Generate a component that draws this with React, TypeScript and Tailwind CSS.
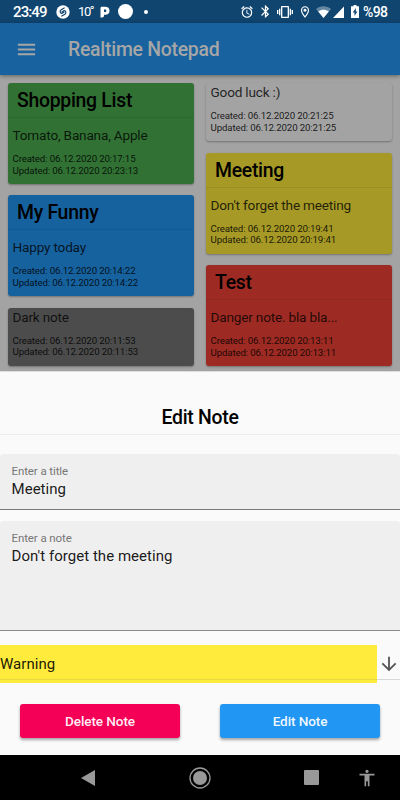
import clsx from "clsx";
import type { FC } from "react";
import { MdAccessibility, MdAlarm, MdArrowDownward, MdBluetooth, MdMenu, MdOutlineLocationOn, MdVibration } from "react-icons/md";

type Note = {
  title?: string;
  text: string;
  created: string;
  updated: string;
  color: string;
};

const leftNotes: Note[] = [
  {
    title: "Shopping List",
    text: "Tomato, Banana, Apple",
    created: "06.12.2020 20:17:15",
    updated: "06.12.2020 20:23:13",
    color: "bg-[#317234]",
  },
  {
    title: "My Funny",
    text: "Happy today",
    created: "06.12.2020 20:14:22",
    updated: "06.12.2020 20:14:22",
    color: "bg-[#16629f]",
  },
  { text: "Dark note", created: "06.12.2020 20:11:53", updated: "06.12.2020 20:11:53", color: "bg-[#4c4c4c]" },
];

const rightNotes: Note[] = [
  { text: "Good luck :)", created: "06.12.2020 20:21:25", updated: "06.12.2020 20:21:25", color: "bg-[#a3a3a3]" },
  {
    title: "Meeting",
    text: "Don't forget the meeting",
    created: "06.12.2020 20:19:41",
    updated: "06.12.2020 20:19:41",
    color: "bg-[#a69926]",
  },
  {
    title: "Test",
    text: "Danger note. bla bla...",
    created: "06.12.2020 20:13:11",
    updated: "06.12.2020 20:13:11",
    color: "bg-[#9e2b23]",
  },
];

const StatusBar: FC = () => {
  return (
    <div className="flex items-center h-[23px] bg-[#104570] text-white">
      <span className="ml-[13px] w-[34px] text-[15px] leading-[24px] font-medium tracking-[-0.9px] whitespace-nowrap">23:49</span>
      <svg className="ml-[9px] size-[14px]" viewBox="0 0 14 14">
        <circle cx="7" cy="7" r="6.7" fill="#fff" />
        <path
          d="M8.2 3 5.2 4.7C3.3 5.9 4.1 8.7 6.2 8.3L7.9 7.2M5.8 11 8.8 9.3C10.7 8.1 9.9 5.3 7.8 5.7L6.1 6.8"
          fill="none"
          stroke="#104570"
          strokeWidth="1.2"
          strokeLinecap="round"
        />
      </svg>
      <span className="ml-[8px] w-[14px] text-[13px] leading-[24px] tracking-[-1.4px] whitespace-nowrap">
        10<span className="relative -top-px">°</span>
      </span>
      <svg className="ml-[8px] w-[10px] h-[12px]" viewBox="0 0 10 12">
        <path
          fill="#fff"
          fillRule="evenodd"
          d="M2 .7H5C7.9.7 9.5 2.2 9.5 4.7S7.9 8.8 5.3 8.8H4V9.6C4 11 3.2 11.5 2.2 11.5H.5V2.2C.5 1.2 1.1.7 2 .7ZM4 3.4V6H5C5.9 6 6.4 5.5 6.4 4.7S5.9 3.4 5 3.4Z"
        />
      </svg>
      <span className="ml-[8px] size-[15px] rounded-full bg-white" />
      <span className="ml-[11px] size-[4px] rounded-full bg-white" />
      <MdAlarm className="ml-[92px] size-[14px]" />
      <MdBluetooth className="ml-[4px] size-[15px]" />
      <MdVibration className="ml-[4px] size-[16px]" />
      <MdOutlineLocationOn className="ml-[5px] size-[14px]" />
      <svg className="ml-[4px] w-[15px] h-[12px]" viewBox="0 0 15 12">
        <path d="M7.5 12 0 3C4.3-.6 10.7-.6 15 3Z" fill="#fff" opacity=".35" />
        <path d="M7.5 12 2.2 5.5C5.3 3 9.7 3 12.8 5.5Z" fill="#fff" />
      </svg>
      <svg className="ml-[2px] w-[11px] h-[12px]" viewBox="0 0 11 12">
        <path d="M0 12 11 .5V12Z" fill="#fff" />
      </svg>
      <svg className="ml-[7px] w-[8px] h-[13px]" viewBox="0 0 8 13">
        <path d="M2.5 0h3v1.3H8V13H0V1.3h2.5Z" fill="#fff" />
        <path d="M4.8 3 1.8 7.4h1.7V11l2.9-4.6H4.8Z" fill="#104570" />
      </svg>
      <span className="ml-[4px] text-[14px] leading-[24px] tracking-[-0.6px] font-medium">%98</span>
    </div>
  );
};

const NoteCard: FC<{ note: Note }> = ({ note }) => {
  return (
    <div className={clsx("w-[186px] rounded-[3px] shadow-[0_1px_2px_rgba(0,0,0,0.3)]", note.color, note.title ? "h-[101px]" : "h-[58px]")}>
      {note.title && (
        <h2 className="pl-[9px] mb-[8px] h-[35px] border-b border-black/8 text-[19.4px] leading-[36px] font-medium tracking-[-0.28px]">
          {note.title}
        </h2>
      )}
      <div className="px-[4.5px]">
        <p className="text-[13.6px] leading-[18px] tracking-[-0.19px] text-black/80 whitespace-nowrap">{note.text}</p>
        <div className="pt-[9px] text-[9.7px] leading-[11.5px] tracking-[-0.14px] text-black/85">
          <p>Created: {note.created}</p>
          <p>Updated: {note.updated}</p>
        </div>
      </div>
    </div>
  );
};

const EditSheet: FC = () => {
  return (
    <section className="h-[384px] bg-[#fafafa] border-t border-[#dedede]">
      <h2 className="h-[63px] pt-[32px] border-b border-[#ececec] text-center text-[19.4px] leading-[28px] font-medium tracking-[-0.28px]">
        Edit Note
      </h2>
      <div className="mt-[19px] h-[56px] pl-[11.5px] pt-[10px] bg-[#efefef] border-b border-[#777] rounded-t-[4px]">
        <p className="text-[11.5px] leading-[15px] tracking-[-0.1px] text-[#777]">Enter a title</p>
        <p className="text-[15px] leading-[20px] tracking-[0.04px] text-black/90">Meeting</p>
      </div>
      <div className="mt-[11px] h-[110px] pl-[11.5px] pt-[10px] bg-[#efefef] border-b border-[#888] rounded-t-[4px]">
        <p className="text-[11.5px] leading-[15px] tracking-[-0.1px] text-[#777]">Enter a note</p>
        <p className="text-[15px] leading-[20px] tracking-[0.04px] text-black/90">Don't forget the meeting</p>
      </div>
      <div className="flex mt-[14px] h-[38px]">
        <div className="w-[377px] bg-[#ffeb3b] text-black/90">
          <p className="h-[35px] border-b border-[#e9d83f] text-[15px] leading-[38px] tracking-[0.04px]">Warning</p>
        </div>
        <div className="flex flex-1 justify-center items-center h-[35px] pt-[3px] border-b border-[#d8d8d8]">
          <MdArrowDownward className="size-[22px] text-[#555]" />
        </div>
      </div>
      <div className="flex gap-10 px-5 mt-[21px]">
        <button className="flex-1 h-[34px] rounded-[3px] bg-[#f50057] text-[13.6px] font-medium tracking-[-0.12px] text-white/95 shadow-[0_2px_3px_rgba(0,0,0,0.35)]">
          Delete Note
        </button>
        <button className="flex-1 h-[34px] rounded-[3px] bg-[#2196f3] text-[13.6px] font-medium tracking-[-0.12px] text-white/95 shadow-[0_2px_3px_rgba(0,0,0,0.35)]">
          Edit Note
        </button>
      </div>
    </section>
  );
};

const NavigationBar: FC = () => {
  return (
    <nav className="flex items-center h-[45px] bg-black text-[#999]">
      <svg className="ml-[81px] w-[14px] h-[16px]" viewBox="0 0 14 16">
        <path d="M0 8 14 0V16Z" fill="currentColor" />
      </svg>
      <svg className="ml-[94px] size-[22px]" viewBox="0 0 22 22">
        <circle cx="11" cy="11" r="10" fill="none" stroke="currentColor" strokeWidth="1.3" />
        <circle cx="11" cy="11" r="7" fill="currentColor" />
      </svg>
      <span className="ml-[93px] size-[15px] rounded-[1px] bg-[#999]" />
      <MdAccessibility className="ml-[38px] size-[20px]" />
    </nav>
  );
};

export default function App() {
  return (
    <div className="w-[400px] h-[800px] overflow-hidden bg-[#a3a3a3] font-[Roboto,sans-serif] text-black">
      <StatusBar />
      <header className="flex items-center h-[52px] bg-[#17629f] shadow-[0_1px_4px_rgba(0,0,0,0.4)] text-[#a6a6a6]">
        <MdMenu className="ml-[15px] size-[23px]" />
        <h1 className="ml-[30px] pt-[2px] text-[19.4px] leading-[28px] font-medium tracking-[-0.25px]">Realtime Notepad</h1>
      </header>
      <main className="flex gap-3 px-2 pt-2 h-[296px]">
        <div className="flex flex-col gap-[11.3px]">
          {leftNotes.map((note) => (
            <NoteCard key={note.text} note={note} />
          ))}
        </div>
        <div className="flex flex-col gap-[11.5px]">
          {rightNotes.map((note) => (
            <NoteCard key={note.text} note={note} />
          ))}
        </div>
      </main>
      <EditSheet />
      <NavigationBar />
    </div>
  );
}
